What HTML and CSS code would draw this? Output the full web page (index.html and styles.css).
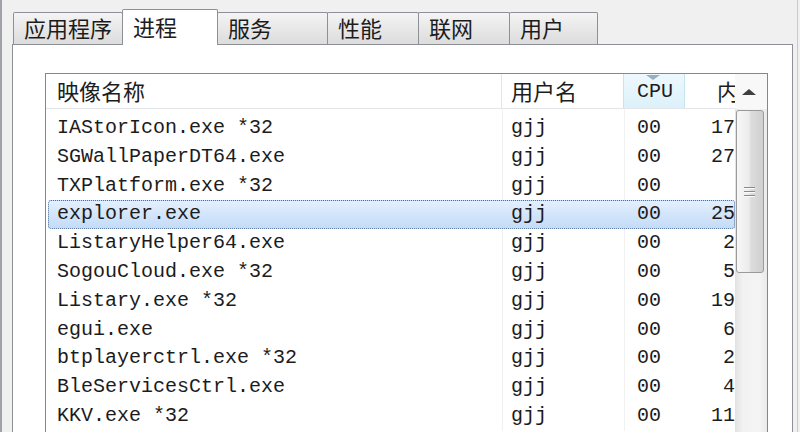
FILE: index.html
```html
<!DOCTYPE html>
<html lang="zh-CN">
<head>
    <meta charset="UTF-8">
    <title>Windows 任务管理器 - 进程</title>
    <link rel="stylesheet" href="styles.css">
</head>
<body>
    <div class="tm-window">
        <div class="tm-tabs">
            <div class="tm-tab">应用程序</div>
            <div class="tm-tab active">进程</div>
            <div class="tm-tab">服务</div>
            <div class="tm-tab">性能</div>
            <div class="tm-tab">联网</div>
            <div class="tm-tab">用户</div>
        </div>

        <div class="tm-panel">
            <div class="proc-list">
                <div class="proc-table">
                    <div class="proc-head">
                        <div class="col col-name">映像名称</div>
                        <div class="col col-user">用户名</div>
                        <div class="col col-cpu sorted"><span class="sort-mark"></span>CPU</div>
                        <div class="col col-mem">内</div>
                    </div>
                    <div class="proc-body" id="procBody"></div>
                </div>
                <div class="vscroll">
                    <div class="vscroll-up"><span class="arrow-up"></span></div>
                    <div class="vscroll-track">
                        <div class="vscroll-thumb">
                            <span class="grip"></span>
                            <span class="grip"></span>
                            <span class="grip"></span>
                        </div>
                    </div>
                </div>
            </div>
        </div>
    </div>

    <script>
        // visible part of the process list
        const processes = [
            { name: 'IAStorIcon.exe *32', user: 'gjj', cpu: '00', mem: '17' },
            { name: 'SGWallPaperDT64.exe', user: 'gjj', cpu: '00', mem: '27' },
            { name: 'TXPlatform.exe *32', user: 'gjj', cpu: '00', mem: '' },
            { name: 'explorer.exe', user: 'gjj', cpu: '00', mem: '25', selected: true },
            { name: 'ListaryHelper64.exe', user: 'gjj', cpu: '00', mem: '2' },
            { name: 'SogouCloud.exe *32', user: 'gjj', cpu: '00', mem: '5' },
            { name: 'Listary.exe *32', user: 'gjj', cpu: '00', mem: '19' },
            { name: 'egui.exe', user: 'gjj', cpu: '00', mem: '6' },
            { name: 'btplayerctrl.exe *32', user: 'gjj', cpu: '00', mem: '2' },
            { name: 'BleServicesCtrl.exe', user: 'gjj', cpu: '00', mem: '4' },
            { name: 'KKV.exe *32', user: 'gjj', cpu: '00', mem: '11' }
        ];

        const body = document.getElementById('procBody');
        body.innerHTML = processes.map(p => `
            <div class="proc-row${p.selected ? ' selected' : ''}">
                <div class="col col-name">${p.name}</div>
                <div class="col col-user">${p.user}</div>
                <div class="col col-cpu">${p.cpu}</div>
                <div class="col col-mem">${p.mem}</div>
            </div>
        `).join('');
    </script>
</body>
</html>
```

FILE: styles.css
```css
:root {
    --chrome: #f0f0f0;
    --tab-border: #8e9097;
    --list-border: #828790;
    --head-line: #e3e5e8;
    --text: #1c1c1c;
}

* {
    margin: 0;
    padding: 0;
    box-sizing: border-box;
}

body {
    background: var(--chrome);
    overflow: hidden;
}

.tm-window {
    width: 798px;
    height: 432px;
    overflow: hidden;
    background: var(--chrome);
    border-left: 2px solid #9fa3a8;
    border-right: 1px solid #c9cbce;
    padding: 0 4px 0 10px;
    font-family: "Noto Sans CJK SC", sans-serif;
    color: var(--text);
}

/* tab strip */
.tm-tabs {
    display: grid;
    grid-template-columns: 109px 95px 110px 91px 91px 88px;
    align-items: end;
    padding: 9px 0 0 1px;
    height: 44px;
}

.tm-tab {
    height: 32px;
    border: 1px solid var(--tab-border);
    border-bottom: none;
    margin-right: -1px;
    background: linear-gradient(#f4f4f4, #e8e8e8 50%, #dcdcdc);
    font-size: 22px;
    line-height: 29px;
    padding-left: 10px;
    border-radius: 2px 2px 0 0;
}

.tm-tab.active {
    position: relative;
    z-index: 1;
    height: 36px;
    margin-bottom: -1px;
    background: #fff;
    line-height: 33px;
    padding-left: 10px;
}

.tm-panel {
    height: 400px;
    background: #fff;
    border: 1px solid var(--tab-border);
    padding: 28px 24px 0 32px;
}

/* process list */
.proc-list {
    display: flex;
    height: 380px;
    border: 1px solid var(--list-border);
    border-bottom: none;
    overflow: hidden;
}

.proc-table {
    width: 689px;
}

.col {
    flex: none;
    overflow: hidden;
    white-space: nowrap;
}

.col-name { width: 456px; padding-left: 11px; }
.col-user { width: 122px; padding-left: 9px; }
.col-cpu  { width: 61px;  padding-left: 13px; }
.col-mem  { width: 50px;  text-align: right; }

.proc-head {
    display: flex;
    height: 35px;
    border-bottom: 1px solid var(--head-line);
    font-size: 22px;
    line-height: 33px;
}

.proc-head .col {
    border-right: 1px solid var(--head-line);
}

.proc-head .col-mem {
    border-right: none;
    text-align: left;
    padding-left: 32px;
}

.proc-head .col-cpu {
    position: relative;
    font-family: "Liberation Mono", monospace;
    font-size: 20px;
    line-height: 36px;
    background: linear-gradient(#eef8fd, #dcf1fa);
    border-left: 1px solid #c5e4f2;
    border-right: 1px solid #c5e4f2;
    margin-left: -1px;
    width: 62px;
}

.sort-mark {
    position: absolute;
    top: 1px;
    left: 22px;
    border-left: 7px solid transparent;
    border-right: 7px solid transparent;
    border-top: 5px solid #98afc3;
}

.proc-body {
    padding-top: 5px;
    font-family: "Liberation Mono", monospace;
    font-size: 20px;
    background:
        linear-gradient(#f1f1f1, #f1f1f1) 456px 0 / 1px 100% no-repeat,
        linear-gradient(#f1f1f1, #f1f1f1) 578px 0 / 1px 100% no-repeat;
}

.proc-row {
    position: relative;
    display: flex;
    height: 28.8px;
    line-height: 28.8px;
}

.proc-row .col {
    position: relative;
}

.proc-row.selected::before {
    content: "";
    position: absolute;
    left: 2px;
    right: 0;
    top: 0;
    bottom: 0;
    border: 1px dotted #4f7097;
    border-radius: 3px;
    background: linear-gradient(#e4effc, #cfe3fb 60%, #c4dcf8);
}

/* vertical scrollbar */
.vscroll {
    width: 32px;
    display: flex;
    flex-direction: column;
}

.vscroll-up {
    height: 35px;
    background: #f8f8f8;
    display: flex;
    align-items: center;
    justify-content: center;
}

.arrow-up {
    border-left: 7px solid transparent;
    border-right: 7px solid transparent;
    border-bottom: 6px solid #3f3f3f;
    margin-left: -4px;
}

.vscroll-track {
    flex: 1;
    padding: 1px 3px 0 1px;
    background: linear-gradient(to right, #e2e2e2, #f2f2f2 25%, #f4f4f4 75%, #eaeaea);
}

.vscroll-thumb {
    height: 163px;
    border: 1px solid #9b9b9b;
    border-radius: 3px;
    background: linear-gradient(to right, #f7f7f7, #ececec 45%, #dcdcdc 55%, #cfcfcf);
    display: flex;
    flex-direction: column;
    align-items: center;
    justify-content: center;
    gap: 3px;
    padding-right: 2px;
}

.grip {
    width: 11px;
    height: 1px;
    background: #8a8a8a;
    box-shadow: 0 1px 0 #fafafa;
}
```
